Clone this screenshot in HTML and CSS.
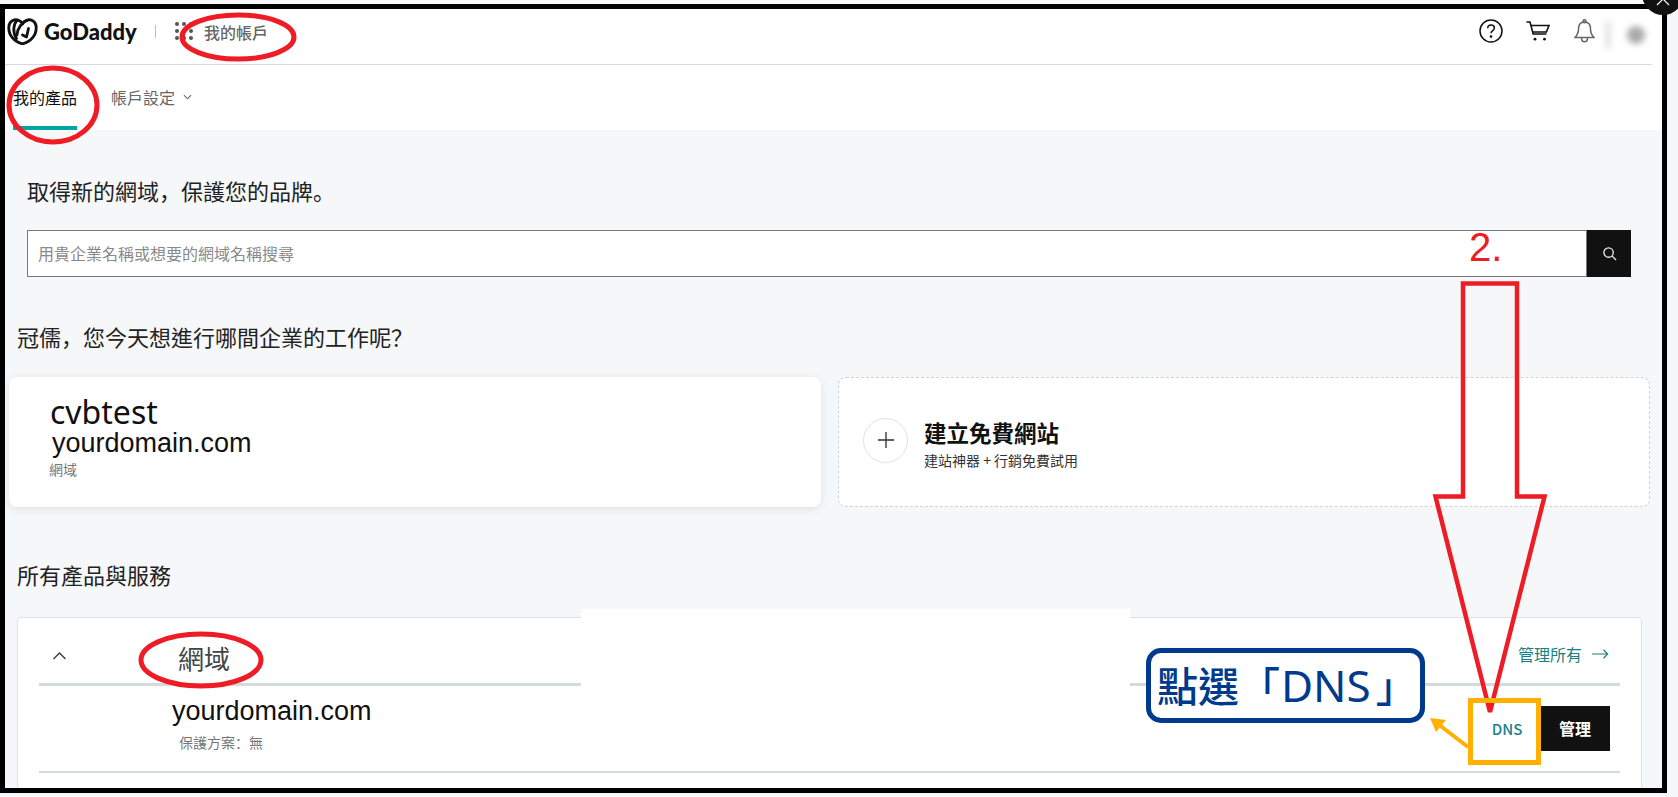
FILE: index.html
```html
<!DOCTYPE html>
<html lang="zh-Hant">
<head>
<meta charset="utf-8">
<title>GoDaddy 我的帳戶</title>
<link rel="stylesheet" href="styles.css">
</head>
<body>
<div class="frame">
  <header class="topbar">
    <div class="brand">
      <svg class="logo" viewBox="0 0 31 27" aria-hidden="true">
        <path d="M15.500 25.800C7 24 1.500 17 1.800 9 2 3.500 6.500 1 10.500 2c2.500.6 4.500 2.500 5 4 .5-1.500 2.500-3.400 5-4 4-1 8.500 1.500 8.700 7 .3 8-5.200 15-13.700 16.800z"/>
        <path d="M10.500 2C6 6 5.500 14 9.500 20.500"/>
        <path d="M21 2C15 4 10.500 10 10 17"/>
        <path d="M21.500 10.500l-2 8.500-4-2"/>
      </svg>
      <span class="logo-text">GoDaddy</span>
    </div>
    <span class="brand-sep"></span>
    <span class="apps">
      <i></i><i></i><i></i><i></i><i></i><i></i><i></i><i></i><i></i>
    </span>
    <span class="account">我的帳戶</span>
    <div class="tools">
      <svg class="icon-help" viewBox="0 0 24 24" aria-hidden="true">
        <circle cx="12" cy="12" r="11"/>
        <path d="M8.700 9.300c0-2 1.500-3.200 3.400-3.200 1.900 0 3.300 1.200 3.300 2.900 0 2.500-3.400 2.600-3.400 5.200"/>
        <circle class="dot" cx="12" cy="17.600" r="1.300"/>
      </svg>
      <svg class="icon-cart" viewBox="0 0 24 20" aria-hidden="true">
        <path d="M0.500 1h3.500l3.200 12h13.300"/>
        <path d="M5 4.500h18l-2.600 6.500H7"/>
        <circle class="dot" cx="9" cy="18.200" r="1.400"/>
        <circle class="dot" cx="18.500" cy="18.200" r="1.400"/>
      </svg>
      <svg class="icon-bell" viewBox="0 0 21 24" aria-hidden="true">
        <path d="M10.500 3C6.500 3 4.500 6 4.500 10c0 4-1 6-3.500 8.500h19C17.500 16 16.500 14 16.500 10c0-4-2-7-6-7z"/>
        <circle cx="10.500" cy="2.200" r="1.500"/>
        <path d="M7.500 19c0 5 6 5 6 0"/>
      </svg>
      <div class="avatar"><span class="avatar-left"></span><span class="avatar-dot"></span></div>
    </div>
  </header>

  <nav class="tabs">
    <a class="tab tab-active">我的產品</a>
    <a class="tab">帳戶設定<svg class="chev" viewBox="0 0 10 6" aria-hidden="true"><path d="M1 1l4 4 4-4"/></svg></a>
  </nav>

  <main class="content">
    <h2 class="promo">取得新的網域<span class="punct" lang="zh-Hans">&#xFF0C;</span>保護您的品牌<span class="punct" lang="zh-Hans">。</span></h2>
    <div class="search">
      <div class="search-input">用貴企業名稱或想要的網域名稱搜尋</div>
      <div class="search-btn">
        <svg viewBox="0 0 16 16" aria-hidden="true"><circle cx="7" cy="7" r="5"/><path d="M10.800 10.800L15 15"/></svg>
      </div>
    </div>

    <h2 class="greeting">冠儒<span class="punct" lang="zh-Hans">&#xFF0C;</span>您今天想進行哪間企業的工作呢<span class="punct" lang="zh-Hans">&#xFF1F;</span></h2>
    <div class="cards">
      <section class="card card-site">
        <div class="site-name">cvbtest</div>
        <div class="site-domain">yourdomain.com</div>
        <div class="site-type">網域</div>
      </section>
      <section class="card card-new">
        <span class="plus"><svg viewBox="0 0 20 20" aria-hidden="true"><path d="M10 1v18M1 10h18"/></svg></span>
        <div class="new-text">
          <div class="new-title">建立免費網站</div>
          <div class="new-sub">建站神器 + 行銷免費試用</div>
        </div>
      </section>
    </div>

    <h2 class="section-title">所有產品與服務</h2>
    <section class="panel">
      <div class="panel-head">
        <svg class="collapse" viewBox="0 0 14 8" aria-hidden="true"><path d="M1 7l6-6 6 6"/></svg>
        <h3 class="panel-title">網域</h3>
        <a class="manage-all">管理所有<svg viewBox="0 0 20 12" aria-hidden="true"><path d="M0 6h18.500M13.500 1l5 5-5 5"/></svg></a>
      </div>
      <div class="row">
        <div class="row-info">
          <div class="row-domain">yourdomain.com</div>
          <div class="row-plan">保護方案<span class="punct" lang="zh-Hans">&#xFF1A;</span>無</div>
        </div>
        <a class="btn-dns">DNS</a>
        <a class="btn-manage">管理</a>
      </div>
    </section>
  </main>
</div>

<div class="patch"></div>

<svg class="marks" viewBox="0 0 1678 797" aria-hidden="true">
  <circle class="corner" cx="1663" cy="-6" r="21"/>
  <path class="corner-x" d="M1657 5l6-6 6 6"/>
  <ellipse class="red" cx="238" cy="37" rx="56" ry="22"/>
  <ellipse class="red" cx="53" cy="105" rx="44" ry="37"/>
  <ellipse class="red" cx="201" cy="660" rx="60" ry="26"/>
  <path class="red red-arrow" d="M1463 283.500H1517V496.500H1544.500L1490 712 1435.500 496.500H1463Z"/>
  <rect class="orange" x="1470.500" y="700.500" width="68" height="62"/>
  <path class="orange-line" d="M1468 747L1438 724"/>
  <path class="orange-tip" d="M1430 718L1446 720 1436 732Z"/>
</svg>

<div class="num">2.</div>
<div class="callout">點選「<span class="callout-dns">DNS</span>」</div>
</body>
</html>
```
FILE: styles.css
```css
* { box-sizing: border-box; }
html, body { margin: 0; padding: 0; }
body {
  position: relative;
  width: 1678px;
  height: 797px;
  overflow: hidden;
  background: #f5f7f8;
  font-family: "Noto Sans CJK TC", "Noto Sans", sans-serif;
  color: #111;
}
h2, h3 { margin: 0; font-weight: 400; }
a { display: block; }
.punct { font-family: "Noto Sans CJK SC", sans-serif; }

.frame {
  width: 1667px;
  height: 789px;
  margin-top: 4px;
  border: 5px solid #000;
  overflow: hidden;
  background: #fff;
}

.topbar {
  display: flex;
  align-items: center;
  height: 56px;
  margin-right: 10px;
  padding: 0 0 8px 2px;
  border-bottom: 1px solid #d4dbe0;
  background: #fff;
}
.brand { display: flex; align-items: center; gap: 6px; margin-bottom: 2px; }
.logo { width: 31px; height: 27px; fill: none; stroke: #111; stroke-width: 2.800; stroke-linecap: round; stroke-linejoin: round; }
.logo-text { width: 93px; font-family: Lato, "Liberation Sans", sans-serif; font-weight: 900; font-size: 22px; color: #111; white-space: nowrap; }
.brand-sep { width: 1px; height: 13px; margin: 0 0 2px 18px; background: #b9bdbf; }
.apps { display: grid; grid-template-columns: repeat(3, 4px); gap: 3px; margin: 0 0 4px 19px; }
.apps i { width: 4px; height: 4px; border-radius: 50%; background: #555; }
.account { margin: 0 0 2px 11px; font-size: 16px; font-weight: 500; color: #666; }
.tools { display: flex; align-items: center; margin: 0 0 3px auto; }
.icon-help { width: 24px; height: 24px; margin-right: 23px; fill: none; stroke: #111; stroke-width: 1.500; }
.icon-help .dot, .icon-cart .dot { fill: #111; stroke: none; }
.icon-cart { width: 24px; height: 20px; margin-right: 24px; fill: none; stroke: #111; stroke-width: 1.600; }
.icon-bell { width: 21px; height: 24px; margin-right: 10px; fill: none; stroke: #666; stroke-width: 1.500; }
.avatar { position: relative; width: 47px; height: 35px; margin-top: 9px; background: #fff; }
.avatar-left { position: absolute; left: 0; top: 3px; width: 6px; height: 28px; background: #e4e4e4; filter: blur(3px); }
.avatar-dot { position: absolute; left: 22px; top: 8px; width: 18px; height: 18px; border-radius: 50%; background: #aaa; filter: blur(3px); }

.tabs { display: flex; gap: 34px; height: 65px; padding-left: 8px; background: #fff; }
.tab { display: flex; align-items: center; height: 65px; padding: 3px 0 4px; font-size: 16px; color: #666; }
.tab-active { padding-bottom: 0; color: #111; border-bottom: 4px solid #00a4a6; }
.chev { width: 9px; height: 6px; margin-left: 8px; fill: none; stroke: #666; stroke-width: 1.200; }

.content { padding-top: 45px; background: #f5f7f8; height: 724px; }
.promo { margin-left: 22px; font-size: 22px; line-height: 30px; color: #222; }
.search { display: flex; width: 1604px; height: 47px; margin: 25px 0 0 22px; }
.search-input {
  flex: 1;
  padding-left: 10px;
  border: 1px solid #777;
  background: #fff;
  font-size: 16px;
  line-height: 45px;
  color: #8a8a8a;
}
.search-btn { display: flex; width: 44px; align-items: center; justify-content: center; background: #111; }
.search-btn svg { width: 15px; height: 15px; fill: none; stroke: #eee; stroke-width: 1.400; }

.greeting { margin: 44px 0 0 12px; font-size: 22px; line-height: 30px; color: #222; }
.cards { display: grid; grid-template-columns: 812px 812px; gap: 17px; margin: 26px 0 0 4px; }
.card { height: 130px; border-radius: 8px; background: #fff; }
.card-site { padding: 18px 0 0 41px; box-shadow: 0 2px 8px rgba(0, 0, 0, 0.09); }
.site-name { font-family: "Noto Sans", sans-serif; font-size: 32px; line-height: 34px; color: #111; }
.site-domain { margin-left: 2px; font-family: "Liberation Sans", sans-serif; font-size: 27px; line-height: 29px; color: #111; }
.site-type { margin: 1px 0 0 -1px; font-size: 14px; line-height: 20px; color: #777; }
.card-new { display: flex; align-items: center; padding-left: 24px; border: 1px dashed #cfd2d4; }
.plus { display: flex; flex: none; width: 45px; height: 45px; margin: -4px 16px 0 0; align-items: center; justify-content: center; border: 1px solid #e2e2e2; border-radius: 50%; }
.plus svg { width: 18px; height: 18px; fill: none; stroke: #333; stroke-width: 1.500; }
.new-text { margin-top: 2px; }
.new-title { font-size: 22.500px; font-weight: 700; line-height: 30px; color: #111; }
.new-sub { margin-top: 3px; font-size: 14px; line-height: 20px; color: #333; }

.section-title { margin: 52px 0 0 12px; font-size: 22px; line-height: 30px; color: #222; }
.panel { width: 1625px; height: 200px; margin: 28px 0 0 12px; padding: 0 21px; border: 1px solid #dde2e5; border-radius: 4px; background: #fff; }
.panel-head { display: flex; align-items: center; height: 68px; border-bottom: 3px solid #d4dbdb; }
.collapse { width: 15px; height: 8px; margin: 10px 0 0 13px; fill: none; stroke: #444; stroke-width: 1.500; }
.panel-title { margin: 15px 0 0 111px; font-size: 26px; line-height: 36px; color: #444; }
.manage-all { display: flex; align-items: center; gap: 10px; margin: 6px 11px 0 auto; font-size: 16px; color: #1a7f7f; }
.manage-all svg { width: 17px; height: 12px; fill: none; stroke: #1a7f7f; stroke-width: 1.300; }
.row { display: flex; align-items: center; height: 87px; padding-right: 10px; border-bottom: 2px solid #d4dbdb; }
.row-info { flex: 1; margin-top: -10px; padding-left: 133px; }
.row-domain { font-family: "Liberation Sans", sans-serif; font-size: 27px; line-height: 30px; color: #111; }
.row-plan { margin: 6px 0 0 7px; font-size: 14px; line-height: 20px; color: #777; }
.btn-dns { width: 66px; font-size: 15px; font-weight: 500; line-height: 45px; text-align: center; color: #1a7f8c; }
.btn-manage { width: 70px; height: 45px; background: #111; font-size: 16px; font-weight: 700; line-height: 45px; text-align: center; color: #fff; }

.patch { position: absolute; left: 581px; top: 609px; width: 549px; height: 80px; background: #fff; }
.marks { position: absolute; left: 0; top: 0; width: 1678px; height: 797px; overflow: hidden; }
.corner { fill: #111; }
.corner-x { fill: none; stroke: #fff; stroke-width: 1.200; }
.red { fill: none; stroke: #ee1c25; stroke-width: 5; }
.red-arrow { stroke-linejoin: miter; stroke-width: 4.500; }
.orange { fill: none; stroke: #ffb000; stroke-width: 5; }
.orange-line { fill: none; stroke: #ffb000; stroke-width: 4; }
.orange-tip { fill: #ffb000; }
.num { position: absolute; left: 1469px; top: 224px; font-family: "Liberation Sans", sans-serif; font-size: 40px; line-height: 46px; color: #ee1c25; }
.callout {
  position: absolute;
  left: 1146px;
  top: 648px;
  width: 279px;
  height: 75px;
  padding-left: 6px;
  border: 5px solid #003a8c;
  border-radius: 15px;
  background: #fff;
  font-size: 41px;
  font-weight: 500;
  line-height: 62px;
  white-space: nowrap;
  color: #003a8c;
}
.callout-dns { margin: 0 5px 0 1px; font-family: "Noto Sans", sans-serif; font-size: 44px; font-weight: 400; }
```
